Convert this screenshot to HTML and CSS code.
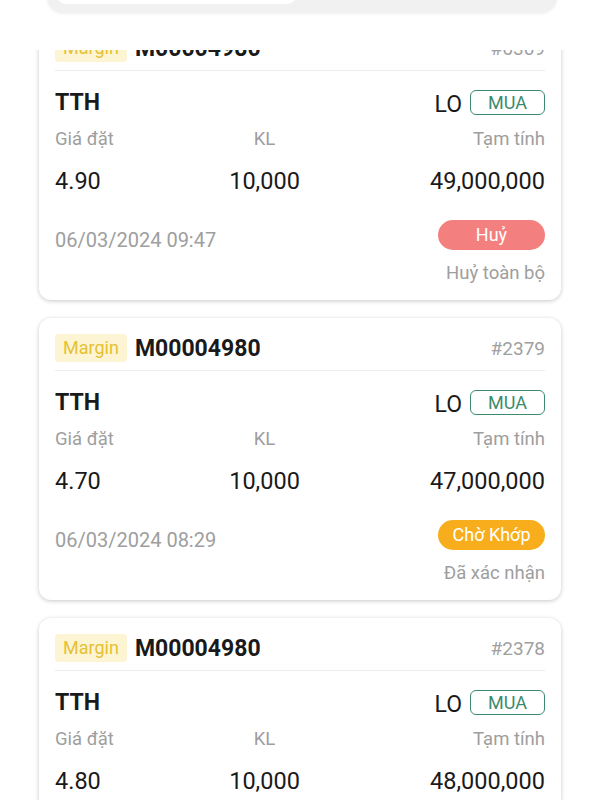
FILE: index.html
```html
<!DOCTYPE html>
<html lang="vi">
<head>
    <meta charset="UTF-8">
    <meta name="viewport" content="width=device-width, initial-scale=1.0">
    <title>Sổ lệnh</title>
    <link rel="stylesheet" href="styles.css">
</head>
<body>
    <div class="topbar">
        <div class="segment">
            <div class="segment-item active"></div>
            <div class="segment-item"></div>
        </div>
    </div>

    <div class="list">
        <div class="card">
            <div class="card-head">
                <span class="tag-margin">Margin</span>
                <span class="account">M00004980</span>
                <span class="order-no">#6309</span>
            </div>
            <div class="symbol-row">
                <span class="symbol">TTH</span>
                <div class="order-type">
                    <span class="lo">LO</span>
                    <span class="side-buy">MUA</span>
                </div>
            </div>
            <div class="figures">
                <div class="col col-left">
                    <span class="label">Giá đặt</span>
                    <span class="value">4.90</span>
                </div>
                <div class="col col-mid">
                    <span class="label">KL</span>
                    <span class="value">10,000</span>
                </div>
                <div class="col col-right">
                    <span class="label">Tạm tính</span>
                    <span class="value">49,000,000</span>
                </div>
            </div>
            <div class="card-foot">
                <span class="time">06/03/2024 09:47</span>
                <div class="status">
                    <span class="pill pill-cancel">Huỷ</span>
                    <span class="status-text">Huỷ toàn bộ</span>
                </div>
            </div>
        </div>

        <div class="card">
            <div class="card-head">
                <span class="tag-margin">Margin</span>
                <span class="account">M00004980</span>
                <span class="order-no">#2379</span>
            </div>
            <div class="symbol-row">
                <span class="symbol">TTH</span>
                <div class="order-type">
                    <span class="lo">LO</span>
                    <span class="side-buy">MUA</span>
                </div>
            </div>
            <div class="figures">
                <div class="col col-left">
                    <span class="label">Giá đặt</span>
                    <span class="value">4.70</span>
                </div>
                <div class="col col-mid">
                    <span class="label">KL</span>
                    <span class="value">10,000</span>
                </div>
                <div class="col col-right">
                    <span class="label">Tạm tính</span>
                    <span class="value">47,000,000</span>
                </div>
            </div>
            <div class="card-foot">
                <span class="time">06/03/2024 08:29</span>
                <div class="status">
                    <span class="pill pill-wait">Chờ Khớp</span>
                    <span class="status-text">Đã xác nhận</span>
                </div>
            </div>
        </div>

        <div class="card">
            <div class="card-head">
                <span class="tag-margin">Margin</span>
                <span class="account">M00004980</span>
                <span class="order-no">#2378</span>
            </div>
            <div class="symbol-row">
                <span class="symbol">TTH</span>
                <div class="order-type">
                    <span class="lo">LO</span>
                    <span class="side-buy">MUA</span>
                </div>
            </div>
            <div class="figures">
                <div class="col col-left">
                    <span class="label">Giá đặt</span>
                    <span class="value">4.80</span>
                </div>
                <div class="col col-mid">
                    <span class="label">KL</span>
                    <span class="value">10,000</span>
                </div>
                <div class="col col-right">
                    <span class="label">Tạm tính</span>
                    <span class="value">48,000,000</span>
                </div>
            </div>
        </div>
    </div>
</body>
</html>
```

FILE: styles.css
```css
body {
    font-family: Roboto, "Noto Sans", Arial, sans-serif;
    background-color: #ffffff;
    color: #1a1a1a;
    margin: 0;
    padding: 0;
    height: 100vh;
    overflow: hidden;
}
.topbar {
    position: relative;
    z-index: 2;
    height: 50px;
    background: #ffffff;
    overflow: hidden;
}
.segment {
    display: flex;
    gap: 8px;
    margin: -31px 43px 0 47px;
    height: 44px;
    padding: 0 8px 9px 8px;
    box-sizing: border-box;
    background: #f1f1f1;
    border-radius: 0 0 16px 16px;
    box-shadow: 0 1px 3px rgba(0, 0, 0, 0.06);
}
.segment-item {
    flex: 1;
    border-radius: 0 0 12px 12px;
}
.segment-item.active {
    background: #ffffff;
}
.list {
    margin-top: -32px;
    padding: 0 39px;
    display: flex;
    flex-direction: column;
    gap: 18px;
}
.card {
    background: #ffffff;
    border-radius: 12px;
    box-shadow: 0 1px 4px rgba(0, 0, 0, 0.22);
    padding: 16px 16px 16px;
}
.card-head {
    display: flex;
    align-items: center;
    height: 28px;
    padding-bottom: 8px;
    border-bottom: 1px solid #ececec;
}
.tag-margin {
    background: #fdf4d4;
    color: #e5c132;
    font-size: 18px;
    line-height: 28px;
    padding: 0 8px;
    border-radius: 4px;
}
.account {
    font-size: 23px;
    font-weight: bold;
    margin-left: 8px;
}
.order-no {
    margin-left: auto;
    color: #a0a0a0;
    font-size: 19px;
}
.symbol-row {
    display: flex;
    justify-content: space-between;
    align-items: center;
    margin-top: 18px;
    height: 27px;
}
.symbol {
    font-size: 23px;
    font-weight: bold;
}
.order-type {
    display: flex;
    align-items: center;
    gap: 8px;
}
.lo {
    font-size: 23px;
    padding-top: 3px;
}
.side-buy {
    border: 1px solid #3b8b6c;
    color: #3b8b6c;
    border-radius: 6px;
    font-size: 18px;
    line-height: 23px;
    padding: 0 17px;
}
.figures {
    display: flex;
    justify-content: space-between;
    margin-top: 12px;
}
.col {
    display: flex;
    flex-direction: column;
    gap: 17px;
}
.col-mid {
    align-items: center;
    margin-right: 15px;
}
.col-right {
    align-items: flex-end;
}
.label {
    color: #9e9e9e;
    font-size: 18.5px;
    line-height: 22px;
}
.value {
    font-size: 23.5px;
    line-height: 28px;
}
.card-foot {
    display: flex;
    justify-content: space-between;
    align-items: flex-start;
    margin-top: 25px;
}
.time {
    color: #9e9e9e;
    font-size: 20px;
    line-height: 24px;
    padding-top: 8px;
}
.status {
    display: flex;
    flex-direction: column;
    align-items: flex-end;
    gap: 12px;
}
.pill {
    min-width: 107px;
    box-sizing: border-box;
    text-align: center;
    color: #ffffff;
    font-size: 18px;
    line-height: 30px;
    border-radius: 15px;
    padding: 0 12px;
}
.pill-cancel {
    background: #f47f7f;
}
.pill-wait {
    background: #f8ae1c;
}
.status-text {
    color: #9e9e9e;
    font-size: 18.5px;
    line-height: 22px;
}
```
